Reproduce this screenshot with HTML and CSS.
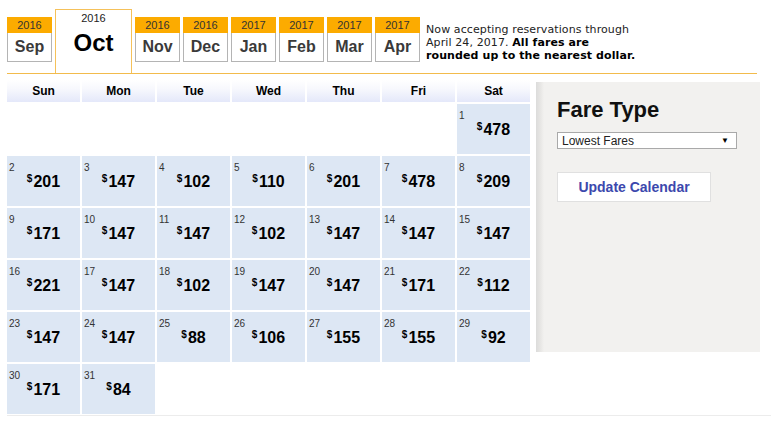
FILE: index.html
```html
<!DOCTYPE html>
<html>
<head>
<meta charset="utf-8">
<link rel="stylesheet" href="styles.css">
</head>
<body>
<div class="page">
  <div class="months">
    <div class="tab"><div class="tab-year">2016</div><div class="tab-mon">Sep</div></div>
    <div class="tab-active"><div class="act-year">2016</div><div class="act-mon">Oct</div></div>
    <div class="tab"><div class="tab-year">2016</div><div class="tab-mon">Nov</div></div>
    <div class="tab"><div class="tab-year">2016</div><div class="tab-mon">Dec</div></div>
    <div class="tab"><div class="tab-year">2017</div><div class="tab-mon">Jan</div></div>
    <div class="tab"><div class="tab-year">2017</div><div class="tab-mon">Feb</div></div>
    <div class="tab"><div class="tab-year">2017</div><div class="tab-mon">Mar</div></div>
    <div class="tab"><div class="tab-year">2017</div><div class="tab-mon">Apr</div></div>
    <div class="notice">Now accepting reservations through April 24, 2017. <b>All fares are rounded up to the nearest dollar.</b></div>
  </div>
  <div class="main">
    <div class="cal">
      <div class="dh">Sun</div><div class="dh">Mon</div><div class="dh">Tue</div><div class="dh">Wed</div><div class="dh">Thu</div><div class="dh">Fri</div><div class="dh">Sat</div>

      <div class="empty"></div><div class="empty"></div><div class="empty"></div><div class="empty"></div><div class="empty"></div><div class="empty"></div>
      <div class="day"><span class="dn">1</span><span class="pr"><sup>$</sup>478</span></div>

      <div class="day"><span class="dn">2</span><span class="pr"><sup>$</sup>201</span></div>
      <div class="day"><span class="dn">3</span><span class="pr"><sup>$</sup>147</span></div>
      <div class="day"><span class="dn">4</span><span class="pr"><sup>$</sup>102</span></div>
      <div class="day"><span class="dn">5</span><span class="pr"><sup>$</sup>110</span></div>
      <div class="day"><span class="dn">6</span><span class="pr"><sup>$</sup>201</span></div>
      <div class="day"><span class="dn">7</span><span class="pr"><sup>$</sup>478</span></div>
      <div class="day"><span class="dn">8</span><span class="pr"><sup>$</sup>209</span></div>

      <div class="day"><span class="dn">9</span><span class="pr"><sup>$</sup>171</span></div>
      <div class="day"><span class="dn">10</span><span class="pr"><sup>$</sup>147</span></div>
      <div class="day"><span class="dn">11</span><span class="pr"><sup>$</sup>147</span></div>
      <div class="day"><span class="dn">12</span><span class="pr"><sup>$</sup>102</span></div>
      <div class="day"><span class="dn">13</span><span class="pr"><sup>$</sup>147</span></div>
      <div class="day"><span class="dn">14</span><span class="pr"><sup>$</sup>147</span></div>
      <div class="day"><span class="dn">15</span><span class="pr"><sup>$</sup>147</span></div>

      <div class="day"><span class="dn">16</span><span class="pr"><sup>$</sup>221</span></div>
      <div class="day"><span class="dn">17</span><span class="pr"><sup>$</sup>147</span></div>
      <div class="day"><span class="dn">18</span><span class="pr"><sup>$</sup>102</span></div>
      <div class="day"><span class="dn">19</span><span class="pr"><sup>$</sup>147</span></div>
      <div class="day"><span class="dn">20</span><span class="pr"><sup>$</sup>147</span></div>
      <div class="day"><span class="dn">21</span><span class="pr"><sup>$</sup>171</span></div>
      <div class="day"><span class="dn">22</span><span class="pr"><sup>$</sup>112</span></div>

      <div class="day"><span class="dn">23</span><span class="pr"><sup>$</sup>147</span></div>
      <div class="day"><span class="dn">24</span><span class="pr"><sup>$</sup>147</span></div>
      <div class="day"><span class="dn">25</span><span class="pr"><sup>$</sup>88</span></div>
      <div class="day"><span class="dn">26</span><span class="pr"><sup>$</sup>106</span></div>
      <div class="day"><span class="dn">27</span><span class="pr"><sup>$</sup>155</span></div>
      <div class="day"><span class="dn">28</span><span class="pr"><sup>$</sup>155</span></div>
      <div class="day"><span class="dn">29</span><span class="pr"><sup>$</sup>92</span></div>

      <div class="day"><span class="dn">30</span><span class="pr"><sup>$</sup>171</span></div>
      <div class="day"><span class="dn">31</span><span class="pr"><sup>$</sup>84</span></div>
    </div>
    <div class="panel">
      <h2 class="panel-title">Fare Type</h2>
      <div class="select"><span>Lowest Fares</span><span class="arrow">&#9660;</span></div>
      <div class="btn">Update Calendar</div>
    </div>
  </div>
</div>
</body>
</html>
```
FILE: styles.css
```css
html, body {
  margin: 0;
  padding: 0;
  background: #fff;
}
body {
  font-family: "Liberation Sans", Arial, sans-serif;
  color: #111;
}
.page {
  padding: 9px 0 0 7px;
}
.months {
  display: flex;
  align-items: flex-start;
  gap: 3px;
  width: 750px;
  border-bottom: 1px solid #f2bb4c;
}
.tab {
  width: 45px;
  margin-top: 8px;
}
.tab-year {
  height: 16px;
  line-height: 16px;
  background: #fcab00;
  text-align: center;
  font-size: 11px;
  color: #333;
}
.tab-mon {
  box-sizing: border-box;
  height: 29px;
  border: 1px solid #b4b4b4;
  border-top: none;
  display: flex;
  align-items: center;
  justify-content: center;
  font-size: 16px;
  font-weight: bold;
  color: #3a3a3a;
}
.tab-active {
  box-sizing: border-box;
  width: 77px;
  height: 64px;
  border: 1px solid #f5c15a;
  border-bottom: none;
  text-align: center;
  padding-top: 2px;
  background: #fff;
}
.act-year {
  font-size: 11px;
  line-height: 13px;
  color: #222;
}
.act-mon {
  font-size: 24px;
  line-height: 28px;
  font-weight: bold;
  color: #000;
  margin-top: 4px;
}
.notice {
  margin-left: 3px;
  margin-top: 14px;
  width: 212px;
  font-family: "DejaVu Sans", Verdana, sans-serif;
  font-size: 11px;
  line-height: 13px;
  letter-spacing: 0.1px;
  color: #222;
}
.notice b {
  color: #000;
}
.main {
  display: flex;
  align-items: flex-start;
  margin-top: 6px;
  padding-bottom: 1px;
  border-bottom: 1px solid #ececec;
}
.cal {
  display: grid;
  grid-template-columns: repeat(7, 73px);
  grid-template-rows: 22px repeat(6, 50px);
  gap: 2px;
}
.dh {
  background: linear-gradient(to bottom, #ffffff 0%, #f7f8fd 40%, #e4e8fa 100%);
  display: flex;
  align-items: center;
  justify-content: center;
  font-size: 12px;
  font-weight: bold;
  color: #000;
}
.day {
  background: #dde7f4;
  display: flex;
  flex-direction: column;
  padding: 6px 0 0 2px;
  box-sizing: border-box;
}
.dn {
  font-size: 10px;
  line-height: 12px;
  color: #333;
}
.pr {
  align-self: center;
  margin-top: -1px;
  margin-left: -2px;
  font-size: 16px;
  line-height: 18px;
  font-weight: bold;
  color: #000;
}
.pr sup {
  font-size: 10px;
  vertical-align: 5px;
  line-height: 0;
  margin-right: 1px;
}
.panel {
  box-sizing: border-box;
  margin-left: 6px;
  margin-top: 2px;
  width: 224px;
  height: 270px;
  background: linear-gradient(to right, #dcdcdb 0px, #e6e5e3 4px, #f2f1ef 8px, #f2f1ef 100%);
  padding: 15px 0 0 21px;
}
.panel-title {
  margin: 0;
  font-size: 22px;
  line-height: 26px;
  font-weight: bold;
  color: #111;
}
.select {
  box-sizing: border-box;
  margin-top: 9px;
  width: 180px;
  height: 17px;
  border: 1px solid #a9a9a9;
  background: #fff;
  display: flex;
  align-items: center;
  justify-content: space-between;
  padding: 0 7px 0 4px;
  font-size: 12px;
  color: #222;
}
.arrow {
  font-size: 8px;
  color: #000;
}
.btn {
  box-sizing: border-box;
  margin-top: 23px;
  width: 154px;
  height: 30px;
  border: 1px solid #e0e0e0;
  background: #fff;
  display: flex;
  align-items: center;
  justify-content: center;
  font-size: 14px;
  font-weight: bold;
  color: #3c48ad;
}
```
